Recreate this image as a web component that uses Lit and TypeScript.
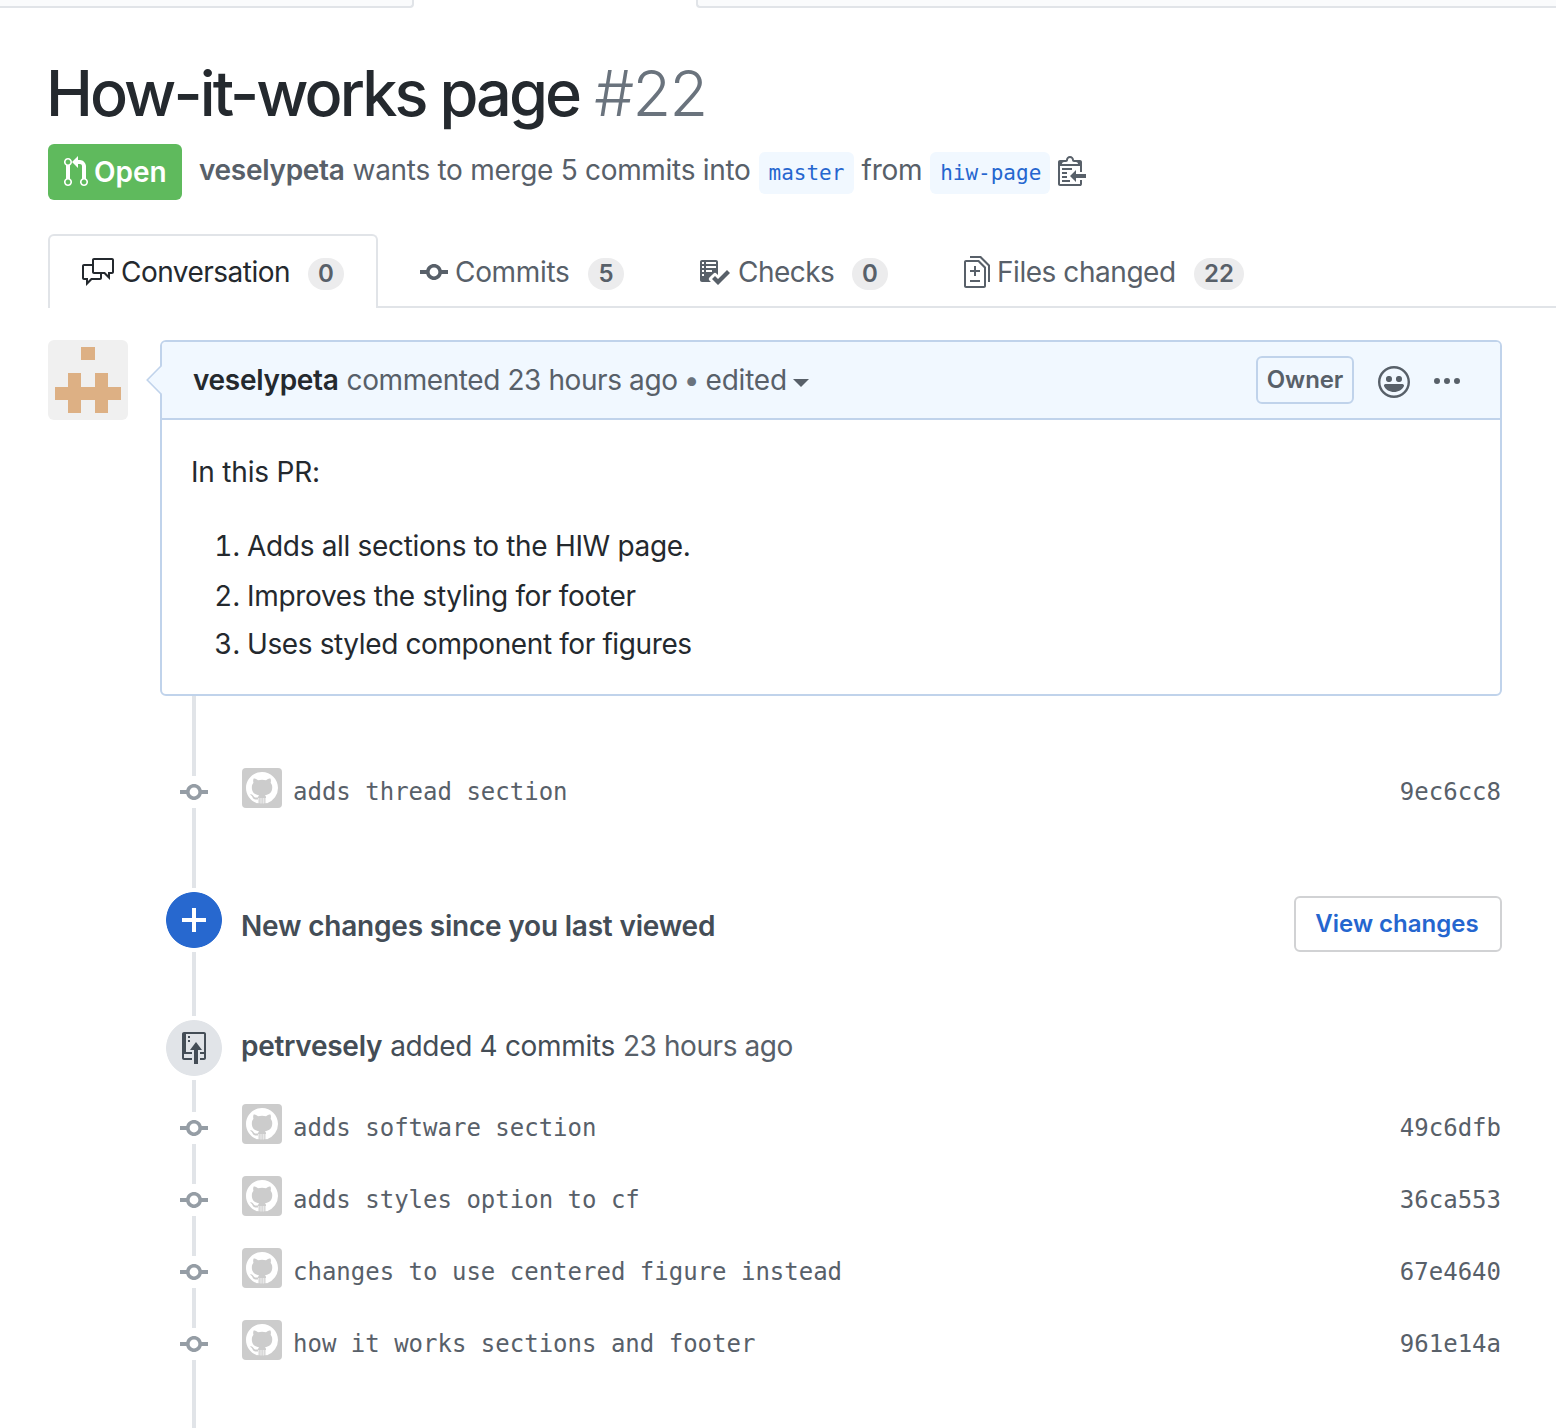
import { LitElement, html, svg, css } from "lit";
import { customElement, property } from "lit/decorators.js";

interface Icon {
  w: number;
  d: string;
}

const ICONS: Record<string, Icon> = {
  pullRequest: {
    w: 12,
    d: "M11 11.28V5c-.03-.78-.34-1.47-.94-2.06C9.46 2.35 8.78 2.03 8 2H7V0L4 3l3 3V4h1c.27.02.48.11.69.31.21.2.3.42.31.69v6.28A1.993 1.993 0 0010 15a1.993 1.993 0 001-3.72zm-1 2.92c-.66 0-1.2-.55-1.2-1.2 0-.65.55-1.2 1.2-1.2.65 0 1.2.55 1.2 1.2 0 .65-.55 1.2-1.2 1.2zM4 3c0-1.11-.89-2-2-2a1.993 1.993 0 00-1 3.72v6.56A1.993 1.993 0 002 15a1.993 1.993 0 001-3.72V4.72c.59-.34 1-.98 1-1.72zm-.8 10c0 .66-.55 1.2-1.2 1.2-.65 0-1.2-.55-1.2-1.2 0-.65.55-1.2 1.2-1.2.65 0 1.2.55 1.2 1.2zM2 4.2C1.34 4.2.8 3.65.8 3c0-.65.55-1.2 1.2-1.2.65 0 1.2.55 1.2 1.2 0 .65-.55 1.2-1.2 1.2z",
  },
  clippy: {
    w: 14,
    d: "M2 13h4v1H2v-1zm5-6H2v1h5V7zm2 3V8l-3 3 3 3v-2h5v-2H9zM4.5 9H2v1h2.5V9zM2 12h2.5v-1H2v1zm9 1h1v2c-.02.28-.11.52-.3.7-.19.18-.42.28-.7.3H1c-.55 0-1-.45-1-1V4c0-.55.45-1 1-1h3c0-1.11.89-2 2-2 1.11 0 2 .89 2 2h3c.55 0 1 .45 1 1v5h-1V6H1v9h10v-2zM2 5h8c0-.55-.45-1-1-1H8c-.55 0-1-.45-1-1s-.45-1-1-1-1 .45-1 1-.45 1-1 1H3c-.55 0-1 .45-1 1z",
  },
  discussion: {
    w: 16,
    d: "M15 1H6c-.55 0-1 .45-1 1v2H1c-.55 0-1 .45-1 1v6c0 .55.45 1 1 1h1v3l3-3h4c.55 0 1-.45 1-1V9h1l3 3V9h1c.55 0 1-.45 1-1V2c0-.55-.45-1-1-1zM9 11H4.5L3 12.5V11H1V5h4v3c0 .55.45 1 1 1h3v2zm6-3h-2v1.5L11.5 8H6V2h9v6z",
  },
  commit: {
    w: 14,
    d: "M10.86 7c-.45-1.72-2-3-3.86-3-1.86 0-3.41 1.28-3.86 3H0v2h3.14c.45 1.72 2 3 3.86 3 1.86 0 3.41-1.28 3.86-3H14V7h-3.14zM7 10.2c-1.22 0-2.2-.98-2.2-2.2 0-1.22.98-2.2 2.2-2.2 1.22 0 2.2.98 2.2 2.2 0 1.22-.98 2.2-2.2 2.2z",
  },
  checklist: {
    w: 16,
    d: "M16 8.5l-6 6-3-3L8.5 10l1.5 1.5L14.5 7 16 8.5zM5.7 12.2l.8.8H2c-.55 0-1-.45-1-1V3c0-.55.45-1 1-1h7c.55 0 1 .45 1 1v6.5l-.8-.8c-.39-.39-1.03-.39-1.42 0L5.7 10.8a.996.996 0 000 1.41v-.01zM4 4h5V3H4v1zm0 2h5V5H4v1zm0 2h3V7H4v1zM3 9H2v1h1V9zm0-2H2v1h1V7zm0-2H2v1h1V5zm0-2H2v1h1V3z",
  },
  diff: {
    w: 13,
    d: "M6 7h2v1H6v2H5V8H3V7h2V5h1v2zm-3 6h5v-1H3v1zM7.5 2L11 5.5V15c0 .55-.45 1-1 1H1c-.55 0-1-.45-1-1V3c0-.55.45-1 1-1h6.5zM10 6L7 3H1v12h9V6zM8.5 0H3v1h5l4 4v8h1V4.5L8.5 0z",
  },
  smiley: {
    w: 16,
    d: "M8 0C3.58 0 0 3.58 0 8s3.58 8 8 8 8-3.58 8-8-3.58-8-8-8zm4.81 12.81a6.72 6.72 0 01-2.17 1.45c-.83.36-1.72.53-2.64.53-.92 0-1.81-.17-2.64-.53-.81-.34-1.55-.83-2.17-1.45a6.773 6.773 0 01-1.45-2.17A6.59 6.59 0 011.21 8c0-.92.17-1.81.53-2.64.34-.81.83-1.55 1.45-2.17.62-.62 1.36-1.11 2.17-1.45A6.59 6.59 0 018 1.21c.92 0 1.81.17 2.64.53.81.34 1.55.83 2.17 1.45.62.62 1.11 1.36 1.45 2.17.36.83.53 1.72.53 2.64 0 .92-.17 1.81-.53 2.64-.34.81-.83 1.55-1.45 2.17zM4 6.8v-.59c0-.66.53-1.19 1.2-1.19h.59c.66 0 1.19.53 1.19 1.19v.59c0 .67-.53 1.2-1.19 1.2H5.2C4.53 8 4 7.47 4 6.8zm5 0v-.59c0-.66.53-1.19 1.2-1.19h.59c.66 0 1.19.53 1.19 1.19v.59c0 .67-.53 1.2-1.19 1.2h-.59C9.53 8 9 7.47 9 6.8zm4 3.2c-.72 1.88-2.91 3-5 3s-4.28-1.13-5-3c-.14-.39.23-1 .66-1h8.59c.41 0 .89.61.75 1z",
  },
  kebab: {
    w: 13,
    d: "M1.5 9a1.5 1.5 0 100-3 1.5 1.5 0 000 3zm5 0a1.5 1.5 0 100-3 1.5 1.5 0 000 3zM13 7.5a1.5 1.5 0 11-3 0 1.5 1.5 0 013 0z",
  },
  plus: { w: 12, d: "M12 9H7v5H5V9H0V7h5V2h2v5h5v2z" },
  repoPush: {
    w: 12,
    d: "M4 3H3V2h1v1zM3 5h1V4H3v1zm4 0L4 9h2v7h2V9h2L7 5zm4-5H1C.45 0 0 .45 0 1v12c0 .55.45 1 1 1h4v-1H1v-2h4v-1H2V1h9.02L11 10H9v1h2v2H9v1h2c.55 0 1-.45 1-1V1c0-.55-.45-1-1-1z",
  },
  octocat: {
    w: 16,
    d: "M8 0C3.58 0 0 3.58 0 8c0 3.54 2.29 6.53 5.47 7.59.4.07.55-.17.55-.38 0-.19-.01-.82-.01-1.49-2.01.37-2.53-.49-2.69-.94-.09-.23-.48-.94-.82-1.13-.28-.15-.68-.52-.01-.53.63-.01 1.08.58 1.23.82.72 1.21 1.87.87 2.33.66.07-.52.28-.87.51-1.07-1.78-.2-3.64-.89-3.64-3.95 0-.87.31-1.59.82-2.15-.08-.2-.36-1.02.08-2.12 0 0 .67-.21 2.2.82.64-.18 1.32-.27 2-.27.68 0 1.36.09 2 .27 1.53-1.04 2.2-.82 2.2-.82.44 1.1.16 1.92.08 2.12.51.56.82 1.27.82 2.15 0 3.07-1.87 3.75-3.65 3.95.29.25.54.73.54 1.48 0 1.07-.01 1.93-.01 2.2 0 .21.15.46.55.38A8.013 8.013 0 0016 8c0-4.42-3.58-8-8-8z",
  },
};

/** Draws an icon at twice its 16-unit grid. */
const icon = (name: string, extra: unknown = null) => {
  const { w, d } = ICONS[name];
  return html`<svg width=${w * 2} height="32" viewBox="0 0 ${w} 16" fill="currentColor" aria-hidden="true">
    <path fill-rule="evenodd" d=${d}></path>
    ${extra}
  </svg>`;
};

/** Pale strokes where the cat's body fades into the disc's lower edge. */
const fade = svg`<path d="M6.4 13v2.6M7.5 13v2.8M8.6 13v2.8M9.6 13v2.6" stroke="#fff" stroke-width=".55" opacity=".75"></path>`;

const TABS = [
  { id: "conversation", label: "Conversation", icon: "discussion", count: 0 },
  { id: "commits", label: "Commits", icon: "commit", count: 5 },
  { id: "checks", label: "Checks", icon: "checklist", count: 0 },
  { id: "files", label: "Files changed", icon: "diff", count: 22 },
];

const CHANGES = [
  "Adds all sections to the HIW page.",
  "Improves the styling for footer",
  "Uses styled component for figures",
];

const COMMITS = [
  ["adds software section", "49c6dfb"],
  ["adds styles option to cf", "36ca553"],
  ["changes to use centered figure instead", "67e4640"],
  ["how it works sections and footer", "961e14a"],
];

const IDENTICON = [
  [2, 0],
  [1, 2],
  [3, 2],
  [0, 3],
  [1, 3],
  [2, 3],
  [3, 3],
  [4, 3],
  [1, 4],
  [3, 4],
];

@customElement("commit-row")
export class CommitRow extends LitElement {
  static styles = css`
    :host {
      display: grid;
      grid-template-columns: 68px 1fr auto;
      align-items: center;
      height: 72px;
      padding-right: 1px;
      color: #586069;
      font: 24px/32px "DejaVu Sans Mono", "Liberation Mono", monospace;
      letter-spacing: 0;
    }
    svg {
      display: block;
    }
    .badge {
      display: flex;
      justify-content: center;
      background: #fff;
      color: #959da5;
    }
    .main {
      display: flex;
      align-items: center;
      gap: 11px;
      padding-left: 14px;
      white-space: pre;
    }
    .avatar {
      display: grid;
      place-items: center;
      width: 40px;
      height: 40px;
      margin-bottom: 8px;
      border-radius: 4px;
      background: #ccc;
      color: #fff;
    }
  `;
  @property() message = "";
  @property() sha = "";
  render() {
    return html`
      <div class="badge">${icon("commit")}</div>
      <div class="main"><span class="avatar">${icon("octocat", fade)}</span><span>${this.message}</span></div>
      <span>${this.sha}</span>
    `;
  }
}

@customElement("app-root")
export class AppRoot extends LitElement {
  static styles = css`
    :host {
      display: block;
      height: 1428px;
      overflow: hidden;
      background: #fff;
      color: #24292e;
      font: 28px/42px Inter, "Liberation Sans", sans-serif;
      letter-spacing: -0.32px;
      white-space: nowrap;
    }
    * {
      box-sizing: border-box;
    }
    svg {
      display: block;
      flex: none;
    }
    p,
    h1,
    ol {
      margin: 0;
      padding: 0;
      font-weight: 400;
    }
    b {
      font-weight: 600;
    }
    .nav {
      display: flex;
      justify-content: space-between;
      height: 8px;
    }
    .nav-left,
    .nav-right {
      border: 2px solid #e1e4e8;
      border-top: 0;
      background: #fafbfc;
    }
    .nav-left {
      width: 414px;
      border-left: 0;
      border-bottom-right-radius: 4px;
    }
    .nav-right {
      width: 860px;
      border-right: 0;
      border-bottom-left-radius: 4px;
    }
    .title {
      display: flex;
      gap: 15px;
      padding: 49px 0 0 46px;
      font-size: 63px;
      font-weight: 450;
      line-height: 72px;
      letter-spacing: -2.9px;
    }
    .number {
      color: #6a737d;
      font-weight: 350;
      letter-spacing: -1.6px;
    }
    .meta {
      display: flex;
      align-items: center;
      gap: 8px;
      height: 56px;
      margin: 15px 0 0 48px;
      color: #586069;
    }
    .meta-text {
      margin-bottom: 4px;
      letter-spacing: -0.3px;
    }
    .clip {
      margin-bottom: 4px;
    }
    .state {
      display: flex;
      align-items: center;
      gap: 6px;
      width: 134px;
      height: 56px;
      margin-right: 9px;
      padding-left: 16px;
      border-radius: 6px;
      background: #5fba5d;
      color: #fff;
      font-weight: 600;
      letter-spacing: 0;
    }
    .branch {
      height: 42px;
      margin-top: 2px;
      padding: 0 9.2px 0 10px;
      border-radius: 6px;
      background: #f1f8ff;
      color: #2566cf;
      font: 21px/42px "DejaVu Sans Mono", "Liberation Mono", monospace;
      letter-spacing: 0;
    }
    .tabs {
      display: flex;
      height: 74px;
      margin-top: 34px;
      padding-left: 48px;
      background: linear-gradient(#e1e4e8, #e1e4e8) 48px 72px / 100% 2px no-repeat;
      color: #586069;
    }
    .tab {
      display: flex;
      align-items: center;
      gap: 7px;
      margin-right: 8px;
      padding: 0 32px;
      border: 2px solid transparent;
      border-bottom: 0;
    }
    .tab.conversation {
      width: 330px;
      border-color: #e1e4e8;
      border-radius: 6px 6px 0 0;
      background: #fff;
      color: #24292e;
      letter-spacing: -0.52px;
    }
    .tab.commits {
      width: 272px;
      margin-right: 6px;
    }
    .tab.checks {
      width: 258px;
      gap: 8px;
      letter-spacing: -0.55px;
    }
    .tab.files {
      width: 348px;
      letter-spacing: -0.45px;
    }
    .count {
      min-width: 36px;
      height: 32px;
      margin: 4px 0 0 auto;
      padding: 0 10px;
      border-radius: 16px;
      background: #ececed;
      color: #586069;
      font-size: 24px;
      font-weight: 600;
      line-height: 31px;
      letter-spacing: 0;
      text-align: center;
    }
    .thread {
      display: flex;
      gap: 32px;
      padding: 32px 54px 0 48px;
    }
    .identicon {
      border-radius: 6px;
    }
    .comment {
      position: relative;
      flex: 1;
      height: 356px;
      border: 2px solid #c0d3eb;
      border-radius: 6px;
    }
    .pointer {
      position: absolute;
      left: -16px;
      top: 22px;
    }
    .comment-head {
      display: flex;
      align-items: center;
      height: 78px;
      padding: 0 40px 0 31px;
      border-bottom: 2px solid #c0d3eb;
      border-radius: 4px 4px 0 0;
      background: #f1f8ff;
      color: #586069;
      letter-spacing: -0.41px;
    }
    .author {
      margin-right: 8px;
      color: #24292e;
      letter-spacing: -0.3px;
    }
    .dot {
      width: 28px;
      text-align: center;
      color: #6a737d;
    }
    .edited {
      letter-spacing: -0.2px;
    }
    .caret {
      margin: 6px 0 0 6.5px;
      border: 8px solid transparent;
      border-top-color: currentColor;
      border-bottom: 0;
    }
    .owner {
      width: 98px;
      height: 48px;
      margin-left: auto;
      border: 2px solid #c0d3eb;
      border-radius: 6px;
      font-size: 24px;
      font-weight: 600;
      line-height: 43px;
      letter-spacing: -0.1px;
      text-align: center;
    }
    .action {
      margin: 4px 0 0 24px;
    }
    .comment-body {
      padding: 31px 29px;
    }
    .intro {
      margin-bottom: 32px;
      letter-spacing: -0.2px;
    }
    .item {
      display: flex;
      gap: 7px;
      height: 42px;
      margin-bottom: 6px;
    }
    .item:first-child {
      margin-bottom: 8px;
    }
    .item:last-child {
      letter-spacing: -0.39px;
    }
    .marker {
      width: 49px;
      font-feature-settings: "tnum";
      letter-spacing: 0;
      text-align: right;
    }
    .timeline {
      display: grid;
      align-content: start;
      height: 732px;
      margin: 0 54px 0 160px;
      padding-top: 60px;
      background: linear-gradient(#e1e4e8, #e1e4e8) 32px 0 / 4px 100% no-repeat;
    }
    .event {
      display: grid;
      grid-template-columns: 68px 1fr auto;
      align-items: center;
      height: 72px;
      color: #444d56;
    }
    .fresh {
      margin: 56px 0;
    }
    .disc {
      display: grid;
      place-items: center;
      width: 64px;
      height: 64px;
      margin-left: 2px;
      background: radial-gradient(circle, #e1e4e8 27.5px, #fff 28.3px);
    }
    .disc.blue {
      background: radial-gradient(circle, #2768cf 27.5px, #fff 28.3px);
      color: #fff;
    }
    .headline {
      padding: 12px 0 0 13px;
      font-weight: 600;
      letter-spacing: -0.2px;
    }
    .summary {
      display: flex;
      gap: 8px;
      padding: 0 0 4px 13px;
    }
    .summary b {
      letter-spacing: -0.28px;
    }
    .when {
      color: #586069;
      letter-spacing: -0.42px;
    }
    .commits-list {
      padding-top: 8px;
    }
    .button {
      width: 208px;
      height: 56px;
      margin-top: 8px;
      padding: 0 2px 0 0;
      border: 2px solid #d1d2d4;
      border-radius: 6px;
      background: #fff;
      color: #2566cf;
      font: 600 24px/50px Inter, "Liberation Sans", sans-serif;
      letter-spacing: 0;
      text-align: center;
    }
  `;

  render() {
    return html`
      <div class="nav"><div class="nav-left"></div><div class="nav-right"></div></div>
      <h1 class="title"><span>How-it-works page</span><span class="number">#22</span></h1>
      <div class="meta">
        <span class="state">${icon("pullRequest")}Open</span>
        <b class="meta-text">veselypeta</b>
        <span class="meta-text">wants to merge 5 commits into</span>
        <span class="branch">master</span>
        <span class="meta-text">from</span>
        <span class="branch">hiw-page</span>
        <span class="clip">${icon("clippy")}</span>
      </div>
      <nav class="tabs">
        ${TABS.map(
          (t) => html`<a class="tab ${t.id}">${icon(t.icon)}<span>${t.label}</span><span class="count">${t.count}</span></a>`
        )}
      </nav>
      <div class="thread">
        <svg class="identicon" width="80" height="80" viewBox="0 0 6 6">
          <rect width="6" height="6" fill="#f0f0f0"></rect>
          <g fill="#ddb084" shape-rendering="crispEdges">
            ${IDENTICON.map(([x, y]) => svg`<rect x=${x + 0.5} y=${y + 0.5} width="1" height="1"></rect>`)}
          </g>
        </svg>
        <section class="comment">
          <header class="comment-head">
            <b class="author">veselypeta</b>
            <span>commented 23 hours ago</span>
            <span class="dot">•</span>
            <span class="edited">edited</span>
            <span class="caret"></span>
            <span class="owner">Owner</span>
            <span class="action">${icon("smiley")}</span>
            <span class="action">${icon("kebab")}</span>
          </header>
          <svg class="pointer" width="17" height="32" viewBox="0 0 17 32">
            <path d="M17 1L16 1.5L1.5 16L16 30.5L17 31z" fill="#f1f8ff"></path>
            <path d="M15.5 1.5L1.2 16L15.5 30.5" fill="none" stroke="#c0d3eb" stroke-width="1.6"></path>
          </svg>
          <div class="comment-body">
            <p class="intro">In this PR:</p>
            <ol>
              ${CHANGES.map((text, i) => html`<li class="item"><span class="marker">${i + 1}.</span><span>${text}</span></li>`)}
            </ol>
          </div>
        </section>
      </div>
      <div class="timeline">
        <commit-row message="adds thread section" sha="9ec6cc8"></commit-row>
        <div class="event fresh">
          <span class="disc blue">${icon("plus")}</span>
          <span class="headline">New changes since you last viewed</span>
          <button class="button">View changes</button>
        </div>
        <div class="event">
          <span class="disc">${icon("repoPush")}</span>
          <span class="summary"><b>petrvesely</b><span>added 4 commits</span><span class="when">23 hours ago</span></span>
        </div>
        <div class="commits-list">
          ${COMMITS.map(([m, s]) => html`<commit-row message=${m} sha=${s}></commit-row>`)}
        </div>
      </div>
    `;
  }
}
